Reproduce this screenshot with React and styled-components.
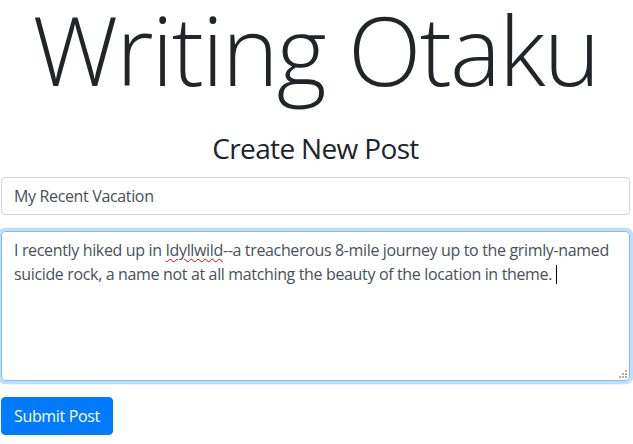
import React from 'react'
import styled, { createGlobalStyle } from 'styled-components'

const GlobalStyle = createGlobalStyle`
    body {
        margin: 0;
        background: #fff;
        font-family: 'Open Sans', 'Noto Sans', sans-serif;
        color: #212529;
    }
`

const fieldText = "#495057"

function App() {
    return (
        <>
            <GlobalStyle />
            <PageWrapper>
                <Title>Writing Otaku</Title>
                <SubTitle>Create New Post</SubTitle>
                <FormGroup>
                    <TitleInput>My Recent Vacation</TitleInput>
                </FormGroup>
                <FormGroup>
                    <BodyArea>
                        I recently hiked up in <Misspelled>Idyllwild</Misspelled>--a treacherous 8-mile journey up to the grimly-named suicide rock, a name not at all matching the beauty of the location in theme.<Caret />
                        <Grip width="8" height="8" viewBox="0 0 8 8">
                            <rect x="6" y="0" width="2" height="2" fill="#b0b0b0" />
                            <rect x="3" y="3" width="2" height="2" fill="#b0b0b0" />
                            <rect x="6" y="3" width="2" height="2" fill="#b0b0b0" />
                            <rect x="0" y="6" width="2" height="2" fill="#b0b0b0" />
                            <rect x="3" y="6" width="2" height="2" fill="#b0b0b0" />
                            <rect x="6" y="6" width="2" height="2" fill="#b0b0b0" />
                        </Grip>
                    </BodyArea>
                </FormGroup>
                <SubmitButton>Submit Post</SubmitButton>
            </PageWrapper>
        </>
    )
}

const PageWrapper = styled.div`
    width: 629px;
    margin-left: 1px;
    display: flex;
    flex-direction: column;
    align-items: stretch;
`

const Title = styled.h1`
    margin: -9px 0 0;
    font-size: 96px;
    font-weight: 300;
    letter-spacing: -1.8px;
    line-height: 1.2;
    text-align: center;
    color: #212529;
`

const SubTitle = styled.h3`
    margin: 26px 0 11px;
    font-size: 28px;
    font-weight: 400;
    letter-spacing: -0.65px;
    line-height: 1.2;
    text-align: center;
`

const FormGroup = styled.div`
    margin-bottom: 16px;
`

const TitleInput = styled.div`
    box-sizing: border-box;
    height: 38px;
    padding: 6px 12px;
    border: 1px solid #ced4da;
    border-radius: 4px;
    font-size: 16px;
    letter-spacing: -0.35px;
    line-height: 24px;
    color: ${fieldText};
`

const BodyArea = styled.div`
    position: relative;
    box-sizing: border-box;
    height: 150px;
    padding: 6px 12px;
    border: 1px solid #80bdff;
    border-radius: 4px;
    box-shadow: 0 0 0 3.2px rgba(0, 123, 255, 0.25);
    font-size: 16px;
    letter-spacing: -0.35px;
    line-height: 24px;
    color: ${fieldText};
`

const Misspelled = styled.span`
    text-decoration: underline wavy #e00000;
    text-decoration-thickness: 1px;
    text-underline-offset: 2px;
`

const Caret = styled.span`
    display: inline-block;
    width: 1px;
    height: 19px;
    margin-left: 4px;
    vertical-align: -4px;
    background: #000;
`

const Grip = styled.svg`
    position: absolute;
    right: 2px;
    bottom: 2px;
`

const SubmitButton = styled.button`
    align-self: flex-start;
    box-sizing: border-box;
    height: 38px;
    padding: 6px 12px;
    border: 1px solid #007bff;
    border-radius: 4px;
    background: #007bff;
    color: #fff;
    font-family: inherit;
    font-size: 16px;
    letter-spacing: -0.35px;
    line-height: 24px;
`

export default App
